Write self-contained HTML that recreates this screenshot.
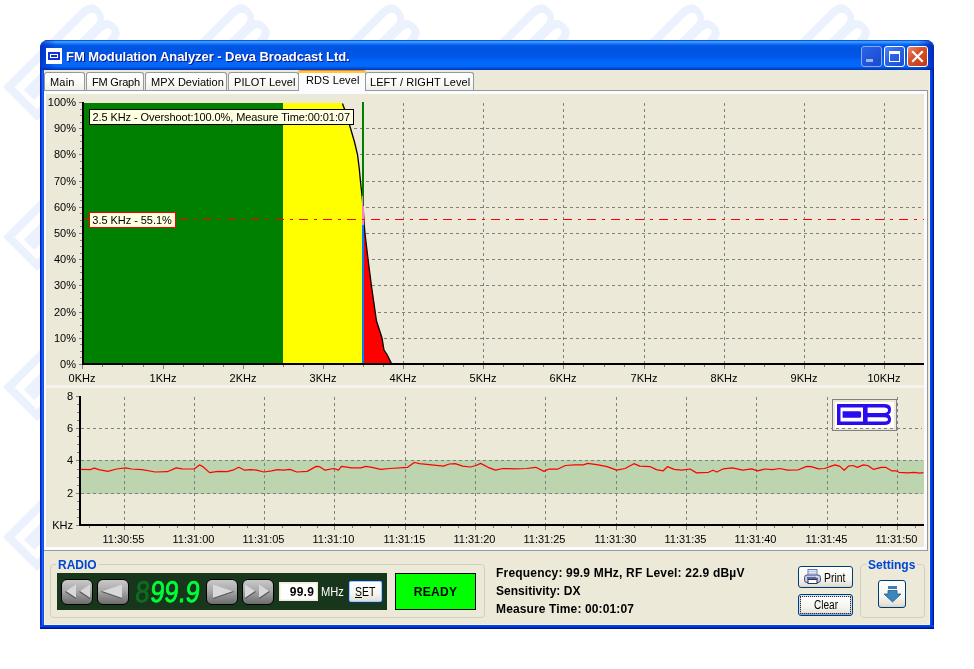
<!DOCTYPE html>
<html><head><meta charset="utf-8"><title>FM Modulation Analyzer - Deva Broadcast Ltd.</title>
<style>
html,body{margin:0;padding:0;}
body{width:974px;height:669px;overflow:hidden;background:#fff;position:relative;font-family:"Liberation Sans",Arial,sans-serif;font-size:11px;color:#000;}
.abs{position:absolute;}
svg.wm{position:absolute;left:0;top:0;}
svg.chart{position:absolute;left:0;top:0;}
#win{will-change:transform;position:absolute;left:40px;top:40px;width:894px;height:589px;background:#0855dd;border-radius:8px 8px 0 0;overflow:hidden;}
#title{position:absolute;left:0;top:0;width:894px;height:30px;background:linear-gradient(to bottom,#0a5ae0 0,#0a5ae0 1px,#419aff 1px,#3c96ff 2px,#2c88ff 3px,#0e6ef6 4px,#0460ea 5px,#0056e4 6.5px,#0054e2 9px,#0055e6 15px,#005af0 18px,#0366fa 21px,#0468fa 26px,#0260ee 27px,#0048d0 28.5px,#003cbc 29.5px,#0038b4 30px);}
#title .shadeL{position:absolute;left:0;top:0;width:16px;height:30px;background:linear-gradient(to right,rgba(0,40,190,.75),rgba(0,60,220,0));}
#title .shadeR{position:absolute;right:0;top:0;width:16px;height:30px;background:linear-gradient(to left,rgba(0,30,170,.8),rgba(0,60,220,0));}
#ttext{position:absolute;left:26px;top:9px;height:16px;line-height:16px;font-weight:bold;font-size:13px;color:#fff;white-space:nowrap;text-shadow:1px 1px 0 #0a1883;letter-spacing:-0.06px;}
#ticon{position:absolute;left:6px;top:8px;width:16px;height:16px;background:#fff;}
#ticon i{position:absolute;left:2px;top:4px;width:12px;height:8px;background:#1030d8;}
#ticon b{position:absolute;left:4px;top:6px;width:8px;height:4px;box-sizing:border-box;border:1px solid #fff;background:#1030d8;}
.cb{position:absolute;top:6px;width:21px;height:21px;box-sizing:border-box;border:1px solid #fff;border-radius:3px;}
#bmin{left:821px;background:linear-gradient(135deg,#2a66e8 0%,#2057dc 50%,#1a48cc 100%);border-color:#8ea8ea;}
#bmax{left:844px;background:linear-gradient(135deg,#4a86f5 0%,#2a62e6 45%,#1d4fd3 100%);}
#bclose{left:867px;background:linear-gradient(135deg,#ec8a6b 0%,#d8502a 40%,#c03a14 100%);}
#bmin i{position:absolute;left:4px;top:12px;width:7px;height:3px;background:#9fb4ea;}
#bmax i{position:absolute;left:4px;top:4px;width:11px;height:11px;box-sizing:border-box;border:1px solid #fff;border-top-width:3px;}
#bl{position:absolute;left:0;top:30px;width:4px;height:555px;background:linear-gradient(to right,#0a1fd0 0,#0a1fd0 1px,#0e3ce0 1px,#0e3ce0 2px,#1868f0 2px,#1868f0 3px,#0c50e4 3px);}
#br{position:absolute;right:0;top:30px;width:4px;height:559px;background:linear-gradient(to left,#001a9e 0,#001a9e 1px,#0030c8 1px,#0030c8 2px,#0046e8 2px);}
#bb{position:absolute;left:0;bottom:0;width:894px;height:4px;background:linear-gradient(to top,#001590 0,#001590 1px,#0020b8 1px,#0020b8 2px,#0044e8 2px);}
#client{position:absolute;left:4px;top:30px;width:886px;height:555px;background:#ece9d8;box-shadow:inset 1px 0 0 #fbf4dc,inset -1px -1px 0 #fbf4dc;}
/* coordinates below are page coordinates via wrapper at 0,0 */
#ui{position:absolute;left:0;top:0;width:974px;height:669px;will-change:transform;}
.tab{position:absolute;top:72px;height:18px;box-sizing:border-box;border:1px solid #919b9c;border-bottom:none;border-radius:3px 3px 0 0;background:linear-gradient(to bottom,#fff 0%,#fbfbf9 50%,#f0f0ea 100%);text-align:left;line-height:19px;white-space:nowrap;font-size:11px;}
.tab.sel{top:70px;height:21px;background:#fcfcfe;border-top:none;line-height:20px;z-index:3;border-radius:3px 3px 0 0;}
.tab.sel:before{content:"";position:absolute;left:-1px;right:-1px;top:0;height:3px;border-radius:3px 3px 0 0;background:linear-gradient(to bottom,#e68b2c 0,#e68b2c 1px,#ffc73c 1px,#ffc73c 100%);}
#pane{position:absolute;left:44px;top:90px;width:884px;height:461px;box-sizing:border-box;border:1px solid #919b9c;border-left:none;background:#fcfcfe;}
#pane i{position:absolute;left:2px;top:3px;width:878px;height:453px;background:#ece9d8;}
.gb{position:absolute;box-sizing:border-box;border:1px solid #d0d0bf;border-radius:4px;}
.gbl{position:absolute;font-weight:bold;color:#0046d5;background:#ece9d8;font-size:12px;line-height:13px;padding:0 2px;white-space:nowrap;}
.ms{display:inline-block;font-size:12px;transform-origin:0 0;white-space:nowrap;}
.xpb{position:absolute;box-sizing:border-box;border:1px solid #003c74;border-radius:3px;background:linear-gradient(to bottom,#fff 0%,#f6f5ef 60%,#e6e3d6 90%,#d6d0c5 100%);text-align:center;font-size:11px;white-space:nowrap;}
.mb{position:absolute;top:579px;width:32px;height:26px;box-sizing:border-box;border:1.5px solid #000;border-radius:6px;background:linear-gradient(to bottom,#c9c9c9 0%,#a9a9a9 45%,#6c6c6c 100%);}
.mb svg{position:absolute;left:-1.5px;top:-1.5px;}
#info{position:absolute;left:496px;top:564px;font-weight:bold;font-size:12px;line-height:18px;white-space:nowrap;}
</style></head><body>
<svg class="wm" width="974" height="669" viewBox="0 0 974 669"><g fill="#ebf1fd" fill-rule="evenodd"><path transform="translate(3 87) rotate(-45) scale(2.29)" d="M0 0H47Q54 0 54 5Q54 9.5 51.5 10.5Q54 11.5 54 16Q54 21 47 21H0ZM3.5 3.6H26V17.4H3.5ZM30.6 3.6H47Q51 3.6 51 6.3Q51 9 47 9H30.6ZM30.6 13.3H47Q51 13.3 51 15.4Q51 17.4 47 17.4H30.6ZM5.6 7.3H22.6Q24.1 7.3 24.1 8.8V12.2Q24.1 13.7 22.6 13.7H5.6Z"/><path transform="translate(153 87) rotate(-45) scale(2.29)" d="M0 0H47Q54 0 54 5Q54 9.5 51.5 10.5Q54 11.5 54 16Q54 21 47 21H0ZM3.5 3.6H26V17.4H3.5ZM30.6 3.6H47Q51 3.6 51 6.3Q51 9 47 9H30.6ZM30.6 13.3H47Q51 13.3 51 15.4Q51 17.4 47 17.4H30.6ZM5.6 7.3H22.6Q24.1 7.3 24.1 8.8V12.2Q24.1 13.7 22.6 13.7H5.6Z"/><path transform="translate(303 87) rotate(-45) scale(2.29)" d="M0 0H47Q54 0 54 5Q54 9.5 51.5 10.5Q54 11.5 54 16Q54 21 47 21H0ZM3.5 3.6H26V17.4H3.5ZM30.6 3.6H47Q51 3.6 51 6.3Q51 9 47 9H30.6ZM30.6 13.3H47Q51 13.3 51 15.4Q51 17.4 47 17.4H30.6ZM5.6 7.3H22.6Q24.1 7.3 24.1 8.8V12.2Q24.1 13.7 22.6 13.7H5.6Z"/><path transform="translate(453 87) rotate(-45) scale(2.29)" d="M0 0H47Q54 0 54 5Q54 9.5 51.5 10.5Q54 11.5 54 16Q54 21 47 21H0ZM3.5 3.6H26V17.4H3.5ZM30.6 3.6H47Q51 3.6 51 6.3Q51 9 47 9H30.6ZM30.6 13.3H47Q51 13.3 51 15.4Q51 17.4 47 17.4H30.6ZM5.6 7.3H22.6Q24.1 7.3 24.1 8.8V12.2Q24.1 13.7 22.6 13.7H5.6Z"/><path transform="translate(603 87) rotate(-45) scale(2.29)" d="M0 0H47Q54 0 54 5Q54 9.5 51.5 10.5Q54 11.5 54 16Q54 21 47 21H0ZM3.5 3.6H26V17.4H3.5ZM30.6 3.6H47Q51 3.6 51 6.3Q51 9 47 9H30.6ZM30.6 13.3H47Q51 13.3 51 15.4Q51 17.4 47 17.4H30.6ZM5.6 7.3H22.6Q24.1 7.3 24.1 8.8V12.2Q24.1 13.7 22.6 13.7H5.6Z"/><path transform="translate(753 87) rotate(-45) scale(2.29)" d="M0 0H47Q54 0 54 5Q54 9.5 51.5 10.5Q54 11.5 54 16Q54 21 47 21H0ZM3.5 3.6H26V17.4H3.5ZM30.6 3.6H47Q51 3.6 51 6.3Q51 9 47 9H30.6ZM30.6 13.3H47Q51 13.3 51 15.4Q51 17.4 47 17.4H30.6ZM5.6 7.3H22.6Q24.1 7.3 24.1 8.8V12.2Q24.1 13.7 22.6 13.7H5.6Z"/><path transform="translate(3 237) rotate(-45) scale(2.29)" d="M0 0H47Q54 0 54 5Q54 9.5 51.5 10.5Q54 11.5 54 16Q54 21 47 21H0ZM3.5 3.6H26V17.4H3.5ZM30.6 3.6H47Q51 3.6 51 6.3Q51 9 47 9H30.6ZM30.6 13.3H47Q51 13.3 51 15.4Q51 17.4 47 17.4H30.6ZM5.6 7.3H22.6Q24.1 7.3 24.1 8.8V12.2Q24.1 13.7 22.6 13.7H5.6Z"/><path transform="translate(3 387) rotate(-45) scale(2.29)" d="M0 0H47Q54 0 54 5Q54 9.5 51.5 10.5Q54 11.5 54 16Q54 21 47 21H0ZM3.5 3.6H26V17.4H3.5ZM30.6 3.6H47Q51 3.6 51 6.3Q51 9 47 9H30.6ZM30.6 13.3H47Q51 13.3 51 15.4Q51 17.4 47 17.4H30.6ZM5.6 7.3H22.6Q24.1 7.3 24.1 8.8V12.2Q24.1 13.7 22.6 13.7H5.6Z"/><path transform="translate(3 537) rotate(-45) scale(2.29)" d="M0 0H47Q54 0 54 5Q54 9.5 51.5 10.5Q54 11.5 54 16Q54 21 47 21H0ZM3.5 3.6H26V17.4H3.5ZM30.6 3.6H47Q51 3.6 51 6.3Q51 9 47 9H30.6ZM30.6 13.3H47Q51 13.3 51 15.4Q51 17.4 47 17.4H30.6ZM5.6 7.3H22.6Q24.1 7.3 24.1 8.8V12.2Q24.1 13.7 22.6 13.7H5.6Z"/></g></svg>
<div id="win">
 <div id="title"><div class="shadeL"></div><div class="shadeR"></div>
  <div id="ticon"><i></i><b></b></div>
  <div id="ttext">FM Modulation Analyzer - Deva Broadcast Ltd.</div>
  <div class="cb" id="bmin"><i></i></div>
  <div class="cb" id="bmax"><i></i></div>
  <div class="cb" id="bclose"><svg width="19" height="19" viewBox="0 0 19 19"><path d="M5 5L14 14M14 5L5 14" stroke="#fff" stroke-width="2.2" stroke-linecap="square"/></svg></div>
 </div>
 <div id="client"></div>
 <div id="bl"></div><div id="br"></div><div id="bb"></div>
</div>
<div id="ui">
 <div id="pane"><i></i></div>
 <div class="tab" style="left:44px;width:41px;padding-left:5px;letter-spacing:0.2px;">Main</div>
 <div class="tab" style="left:86px;width:58px;padding-left:5px;letter-spacing:-0.2px;">FM Graph</div>
 <div class="tab" style="left:145px;width:82px;padding-left:5px;letter-spacing:0px;">MPX Deviation</div>
 <div class="tab" style="left:228px;width:71px;padding-left:5px;letter-spacing:0.05px;">PILOT Level</div>
 <div class="tab" style="left:365px;width:109px;padding-left:4px;letter-spacing:0.05px;">LEFT / RIGHT Level</div>
 <div class="tab sel" style="left:298px;width:68px;padding-left:7px;letter-spacing:0.1px;">RDS Level</div>
 <svg class="chart" width="974" height="669" viewBox="0 0 974 669">
<g stroke="#808080" stroke-width="1" stroke-dasharray="3 3" shape-rendering="crispEdges" fill="none">
<path d="M84 338.5H922"/>
<path d="M84 312.5H922"/>
<path d="M84 285.5H922"/>
<path d="M84 259.5H922"/>
<path d="M84 233.5H922"/>
<path d="M84 207.5H922"/>
<path d="M84 181.5H922"/>
<path d="M84 154.5H922"/>
<path d="M84 128.5H922"/>
<path d="M403.5 103V363"/>
<path d="M483.5 103V363"/>
<path d="M563.5 103V363"/>
<path d="M644.5 103V363"/>
<path d="M724.5 103V363"/>
<path d="M804.5 103V363"/>
<path d="M884.5 103V363"/>
</g>
<g shape-rendering="crispEdges">
<rect x="84" y="103" width="199" height="261" fill="#008000"/>
<polygon points="283.0,103.0 342.4,103.4 344.5,109.0 347.0,117.0 350.6,128.5 354.5,142.0 357.5,154.6 359.2,168.0 360.4,180.8 362.0,195.4 362.0,364.0 283.0,364.0" fill="#ffff00"/>
<polygon points="364.0,224.0 364.2,224.5 365.0,233.5 368.0,259.0 371.4,285.5 375.2,312.0 376.5,321.0 382.0,338.0 384.0,350.0 387.0,354.5 391.5,363.5 364.0,364.0" fill="#ff0000"/>
</g>
<polyline points="342.4,103.4 344.5,109.0 347.0,117.0 350.6,128.5 354.5,142.0 357.5,154.6 359.2,168.0 360.4,180.8 362.0,195.4 363.3,210.0 364.2,224.5 365.0,233.5 368.0,259.0 371.4,285.5 375.2,312.0 376.5,321.0 382.0,338.0 384.0,350.0 387.0,354.5 391.5,363.5" fill="none" stroke="#000" stroke-width="1.3"/>
<g shape-rendering="crispEdges">
<rect x="362" y="102" width="2" height="94" fill="#008000"/>
<rect x="363" y="196" width="1" height="10" fill="#008000"/>
<rect x="362" y="196" width="1" height="29" fill="#ff80c0"/>
<rect x="363" y="206" width="1" height="19" fill="#ff80c0"/>
<rect x="362" y="225" width="2" height="139" fill="#0080ff"/>
<path d="M83 219.5H924" stroke="#ff0000" stroke-width="1" stroke-dasharray="9 6 3 6" fill="none"/>
<rect x="82" y="102" width="2" height="263" fill="#000"/>
<rect x="82" y="363" width="842" height="2" fill="#000"/>
<g fill="#808080">
<rect x="79" y="364" width="3" height="1"/>
<rect x="80" y="357" width="2" height="1"/>
<rect x="80" y="351" width="2" height="1"/>
<rect x="80" y="344" width="2" height="1"/>
<rect x="79" y="338" width="3" height="1"/>
<rect x="80" y="331" width="2" height="1"/>
<rect x="80" y="325" width="2" height="1"/>
<rect x="80" y="318" width="2" height="1"/>
<rect x="79" y="312" width="3" height="1"/>
<rect x="80" y="305" width="2" height="1"/>
<rect x="80" y="298" width="2" height="1"/>
<rect x="80" y="292" width="2" height="1"/>
<rect x="79" y="285" width="3" height="1"/>
<rect x="80" y="279" width="2" height="1"/>
<rect x="80" y="272" width="2" height="1"/>
<rect x="80" y="266" width="2" height="1"/>
<rect x="79" y="259" width="3" height="1"/>
<rect x="80" y="253" width="2" height="1"/>
<rect x="80" y="246" width="2" height="1"/>
<rect x="80" y="240" width="2" height="1"/>
<rect x="79" y="233" width="3" height="1"/>
<rect x="80" y="226" width="2" height="1"/>
<rect x="80" y="220" width="2" height="1"/>
<rect x="80" y="213" width="2" height="1"/>
<rect x="79" y="207" width="3" height="1"/>
<rect x="80" y="200" width="2" height="1"/>
<rect x="80" y="194" width="2" height="1"/>
<rect x="80" y="187" width="2" height="1"/>
<rect x="79" y="181" width="3" height="1"/>
<rect x="80" y="174" width="2" height="1"/>
<rect x="80" y="168" width="2" height="1"/>
<rect x="80" y="161" width="2" height="1"/>
<rect x="79" y="154" width="3" height="1"/>
<rect x="80" y="148" width="2" height="1"/>
<rect x="80" y="141" width="2" height="1"/>
<rect x="80" y="135" width="2" height="1"/>
<rect x="79" y="128" width="3" height="1"/>
<rect x="80" y="122" width="2" height="1"/>
<rect x="80" y="115" width="2" height="1"/>
<rect x="80" y="109" width="2" height="1"/>
<rect x="79" y="102" width="3" height="1"/>
<rect x="82" y="365" width="1" height="4"/>
<rect x="102" y="365" width="1" height="2"/>
<rect x="122" y="365" width="1" height="2"/>
<rect x="143" y="365" width="1" height="2"/>
<rect x="163" y="365" width="1" height="4"/>
<rect x="183" y="365" width="1" height="2"/>
<rect x="203" y="365" width="1" height="2"/>
<rect x="223" y="365" width="1" height="2"/>
<rect x="243" y="365" width="1" height="4"/>
<rect x="263" y="365" width="1" height="2"/>
<rect x="283" y="365" width="1" height="2"/>
<rect x="303" y="365" width="1" height="2"/>
<rect x="323" y="365" width="1" height="4"/>
<rect x="343" y="365" width="1" height="2"/>
<rect x="363" y="365" width="1" height="2"/>
<rect x="383" y="365" width="1" height="2"/>
<rect x="403" y="365" width="1" height="4"/>
<rect x="423" y="365" width="1" height="2"/>
<rect x="443" y="365" width="1" height="2"/>
<rect x="463" y="365" width="1" height="2"/>
<rect x="483" y="365" width="1" height="4"/>
<rect x="503" y="365" width="1" height="2"/>
<rect x="523" y="365" width="1" height="2"/>
<rect x="543" y="365" width="1" height="2"/>
<rect x="563" y="365" width="1" height="4"/>
<rect x="583" y="365" width="1" height="2"/>
<rect x="604" y="365" width="1" height="2"/>
<rect x="624" y="365" width="1" height="2"/>
<rect x="644" y="365" width="1" height="4"/>
<rect x="664" y="365" width="1" height="2"/>
<rect x="684" y="365" width="1" height="2"/>
<rect x="704" y="365" width="1" height="2"/>
<rect x="724" y="365" width="1" height="4"/>
<rect x="744" y="365" width="1" height="2"/>
<rect x="764" y="365" width="1" height="2"/>
<rect x="784" y="365" width="1" height="2"/>
<rect x="804" y="365" width="1" height="4"/>
<rect x="824" y="365" width="1" height="2"/>
<rect x="844" y="365" width="1" height="2"/>
<rect x="864" y="365" width="1" height="2"/>
<rect x="884" y="365" width="1" height="4"/>
<rect x="904" y="365" width="1" height="2"/>
</g>
</g>
<g font-family="Liberation Sans, Arial, sans-serif" font-size="11" fill="#000">
<text x="76" y="368" text-anchor="end">0%</text>
<text x="76" y="342" text-anchor="end">10%</text>
<text x="76" y="316" text-anchor="end">20%</text>
<text x="76" y="289" text-anchor="end">30%</text>
<text x="76" y="263" text-anchor="end">40%</text>
<text x="76" y="237" text-anchor="end">50%</text>
<text x="76" y="211" text-anchor="end">60%</text>
<text x="76" y="185" text-anchor="end">70%</text>
<text x="76" y="158" text-anchor="end">80%</text>
<text x="76" y="132" text-anchor="end">90%</text>
<text x="76" y="106" text-anchor="end">100%</text>
<text x="82" y="382" text-anchor="middle">0KHz</text>
<text x="163" y="382" text-anchor="middle">1KHz</text>
<text x="243" y="382" text-anchor="middle">2KHz</text>
<text x="323" y="382" text-anchor="middle">3KHz</text>
<text x="403" y="382" text-anchor="middle">4KHz</text>
<text x="483" y="382" text-anchor="middle">5KHz</text>
<text x="563" y="382" text-anchor="middle">6KHz</text>
<text x="644" y="382" text-anchor="middle">7KHz</text>
<text x="724" y="382" text-anchor="middle">8KHz</text>
<text x="804" y="382" text-anchor="middle">9KHz</text>
<text x="884" y="382" text-anchor="middle">10KHz</text>
</g>
<g shape-rendering="crispEdges">
<rect x="89.5" y="109.5" width="264" height="15" fill="#ffffe1" stroke="#000"/>
<rect x="89.5" y="212.5" width="86" height="15" fill="#ffffe1" stroke="#ff0000"/>
</g>
<g font-family="Liberation Sans, Arial, sans-serif" font-size="11" fill="#000">
<text x="92.5" y="121" textLength="257.5" lengthAdjust="spacing">2.5 KHz - Overshoot:100.0%, Measure Time:00:01:07</text>
<text x="92.3" y="224" textLength="79.5" lengthAdjust="spacing">3.5 KHz - 55.1%</text>
</g>
<rect x="46" y="385" width="878" height="3" fill="#f4f2ea" shape-rendering="crispEdges"/>
<g shape-rendering="crispEdges">
<rect x="81" y="460" width="843" height="34" fill="#bdd5ae"/>
</g>
<g stroke="#808080" stroke-width="1" stroke-dasharray="3 3" shape-rendering="crispEdges" fill="none">
<path d="M81 493.5H922"/>
<path d="M81 460.5H922"/>
<path d="M81 428.5H922"/>
<path d="M124.5 397V524"/>
<path d="M194.5 397V524"/>
<path d="M264.5 397V524"/>
<path d="M334.5 397V524"/>
<path d="M405.5 397V524"/>
<path d="M475.5 397V524"/>
<path d="M545.5 397V524"/>
<path d="M616.5 397V524"/>
<path d="M686.5 397V524"/>
<path d="M756.5 397V524"/>
<path d="M827.5 397V524"/>
<path d="M897.5 397V524"/>
</g>
<g shape-rendering="crispEdges">
<rect x="832.5" y="399.5" width="64" height="31" fill="#ece9d8" stroke="#808080"/>
<rect x="835" y="402" width="59" height="26" fill="#fff"/>
</g>
<path transform="translate(837 404)" fill="#2a0cf0" fill-rule="evenodd" d="M0 0H47Q54 0 54 5Q54 9.5 51.5 10.5Q54 11.5 54 16Q54 21 47 21H0ZM3.5 3.6H26V17.4H3.5ZM30.6 3.6H47Q51 3.6 51 6.3Q51 9 47 9H30.6ZM30.6 13.3H47Q51 13.3 51 15.4Q51 17.4 47 17.4H30.6ZM5.6 7.3H22.6Q24.1 7.3 24.1 8.8V12.2Q24.1 13.7 22.6 13.7H5.6Z"/>
<path d="M836 428.5H894" stroke="#808080" stroke-dasharray="3 3" shape-rendering="crispEdges"/>
<polyline points="81.0,469.4 90.0,469.6 94.4,468.2 98.8,469.6 107.8,471.4 116.7,469.0 125.6,467.9 131.6,469.0 142.0,469.6 155.4,472.0 167.3,471.7 176.2,467.9 182.2,468.8 194.1,469.0 199.5,464.9 203.0,466.7 209.6,472.6 217.9,471.4 226.9,471.7 232.8,470.2 238.8,467.3 244.7,470.2 250.7,469.6 256.6,470.2 264.0,472.0 271.5,470.8 277.5,469.6 283.4,470.2 290.0,469.4 296.8,472.0 307.2,471.4 316.2,466.4 319.7,466.7 325.1,470.2 334.0,468.5 338.5,470.2 341.5,466.4 351.9,467.9 360.8,467.9 366.0,466.4 371.9,467.3 380.8,469.4 389.8,468.5 407.6,467.3 414.2,462.5 419.5,463.7 431.5,464.9 443.4,466.1 449.3,464.0 455.3,463.7 462.7,466.1 470.2,467.0 476.1,465.5 480.6,463.4 488.0,467.3 495.5,470.2 502.9,468.5 514.8,468.8 526.7,468.5 535.7,467.3 544.0,471.4 549.0,469.0 558.0,469.0 565.4,465.5 574.4,464.9 583.3,464.9 587.8,463.4 598.2,464.9 607.1,466.7 616.6,470.2 625.0,468.5 633.9,463.7 639.8,466.1 650.4,466.7 656.4,469.6 663.2,470.8 667.4,466.7 674.2,469.4 681.7,470.2 690.0,469.0 696.6,472.9 708.5,472.3 712.9,470.2 716.8,472.0 723.4,468.8 732.3,467.9 742.7,470.2 751.6,468.8 757.6,470.8 765.0,469.0 772.5,469.6 779.9,468.5 787.4,470.2 797.8,470.0 806.7,466.4 811.2,466.7 818.6,468.8 824.6,468.5 830.5,466.4 835.0,464.9 840.0,466.4 844.2,470.2 848.4,466.1 852.9,465.5 857.3,467.3 863.3,464.9 867.7,465.5 873.7,469.4 881.1,467.3 885.6,467.3 891.6,470.8 896.0,470.8 899.0,472.3 907.9,472.9 913.9,472.3 919.8,473.2 923.4,472.6" fill="none" stroke="#ff0000" stroke-width="1.25" stroke-linejoin="round"/>
<g shape-rendering="crispEdges">
<rect x="79" y="396" width="2" height="130" fill="#000"/>
<rect x="79" y="524" width="845" height="2" fill="#000"/>
<g fill="#808080">
<rect x="76" y="525" width="3" height="1"/>
<rect x="77" y="517" width="2" height="1"/>
<rect x="77" y="509" width="2" height="1"/>
<rect x="77" y="501" width="2" height="1"/>
<rect x="76" y="493" width="3" height="1"/>
<rect x="77" y="485" width="2" height="1"/>
<rect x="77" y="477" width="2" height="1"/>
<rect x="77" y="469" width="2" height="1"/>
<rect x="76" y="460" width="3" height="1"/>
<rect x="77" y="452" width="2" height="1"/>
<rect x="77" y="444" width="2" height="1"/>
<rect x="77" y="436" width="2" height="1"/>
<rect x="76" y="428" width="3" height="1"/>
<rect x="77" y="420" width="2" height="1"/>
<rect x="77" y="412" width="2" height="1"/>
<rect x="77" y="404" width="2" height="1"/>
<rect x="76" y="396" width="3" height="1"/>
<rect x="89" y="526" width="1" height="2"/>
<rect x="106" y="526" width="1" height="2"/>
<rect x="124" y="526" width="1" height="4"/>
<rect x="142" y="526" width="1" height="2"/>
<rect x="159" y="526" width="1" height="2"/>
<rect x="177" y="526" width="1" height="2"/>
<rect x="194" y="526" width="1" height="4"/>
<rect x="212" y="526" width="1" height="2"/>
<rect x="229" y="526" width="1" height="2"/>
<rect x="247" y="526" width="1" height="2"/>
<rect x="264" y="526" width="1" height="4"/>
<rect x="282" y="526" width="1" height="2"/>
<rect x="300" y="526" width="1" height="2"/>
<rect x="317" y="526" width="1" height="2"/>
<rect x="334" y="526" width="1" height="4"/>
<rect x="352" y="526" width="1" height="2"/>
<rect x="370" y="526" width="1" height="2"/>
<rect x="388" y="526" width="1" height="2"/>
<rect x="405" y="526" width="1" height="4"/>
<rect x="423" y="526" width="1" height="2"/>
<rect x="440" y="526" width="1" height="2"/>
<rect x="458" y="526" width="1" height="2"/>
<rect x="475" y="526" width="1" height="4"/>
<rect x="493" y="526" width="1" height="2"/>
<rect x="511" y="526" width="1" height="2"/>
<rect x="528" y="526" width="1" height="2"/>
<rect x="545" y="526" width="1" height="4"/>
<rect x="563" y="526" width="1" height="2"/>
<rect x="581" y="526" width="1" height="2"/>
<rect x="599" y="526" width="1" height="2"/>
<rect x="616" y="526" width="1" height="4"/>
<rect x="634" y="526" width="1" height="2"/>
<rect x="651" y="526" width="1" height="2"/>
<rect x="669" y="526" width="1" height="2"/>
<rect x="686" y="526" width="1" height="4"/>
<rect x="704" y="526" width="1" height="2"/>
<rect x="722" y="526" width="1" height="2"/>
<rect x="739" y="526" width="1" height="2"/>
<rect x="756" y="526" width="1" height="4"/>
<rect x="774" y="526" width="1" height="2"/>
<rect x="792" y="526" width="1" height="2"/>
<rect x="809" y="526" width="1" height="2"/>
<rect x="827" y="526" width="1" height="4"/>
<rect x="845" y="526" width="1" height="2"/>
<rect x="862" y="526" width="1" height="2"/>
<rect x="880" y="526" width="1" height="2"/>
<rect x="897" y="526" width="1" height="4"/>
<rect x="915" y="526" width="1" height="2"/>
</g></g>
<g font-family="Liberation Sans, Arial, sans-serif" font-size="11" fill="#000">
<text x="73" y="497" text-anchor="end">2</text>
<text x="73" y="464" text-anchor="end">4</text>
<text x="73" y="432" text-anchor="end">6</text>
<text x="73" y="400" text-anchor="end">8</text>
<text x="73" y="529" text-anchor="end">KHz</text>
<text x="123.5" y="543" text-anchor="middle">11:30:55</text>
<text x="193.5" y="543" text-anchor="middle">11:31:00</text>
<text x="263.5" y="543" text-anchor="middle">11:31:05</text>
<text x="333.5" y="543" text-anchor="middle">11:31:10</text>
<text x="404.5" y="543" text-anchor="middle">11:31:15</text>
<text x="474.5" y="543" text-anchor="middle">11:31:20</text>
<text x="544.5" y="543" text-anchor="middle">11:31:25</text>
<text x="615.5" y="543" text-anchor="middle">11:31:30</text>
<text x="685.5" y="543" text-anchor="middle">11:31:35</text>
<text x="755.5" y="543" text-anchor="middle">11:31:40</text>
<text x="826.5" y="543" text-anchor="middle">11:31:45</text>
<text x="896.5" y="543" text-anchor="middle">11:31:50</text>
</g>
</svg>
 <!-- RADIO group -->
 <div class="gb" style="left:50px;top:564px;width:435px;height:54px;"></div>
 <div class="gbl" style="left:56px;top:559px;">RADIO</div>
 <div class="abs" style="left:57px;top:573px;width:330px;height:37px;background:#18361c;"></div>
 <div class="mb" style="left:61px;"><svg width="32" height="26"><path d="M4.5 12.5L15 5.5V19.5Z M18.5 12.5L29 5.5V19.5Z" fill="#d8d8d8"/><path d="M4.5 12.5L15 19.5M18.5 12.5L29 19.5" stroke="#555" stroke-width="1.2" fill="none"/></svg></div>
 <div class="mb" style="left:97px;"><svg width="32" height="26"><path d="M4.5 12.5L25 5.5V19.5Z" fill="#d8d8d8"/><path d="M4.5 12.5L25 19.5" stroke="#555" stroke-width="1.2" fill="none"/></svg></div>
 <div class="abs" id="led" style="left:134px;top:577px;width:68px;height:28px;"><span class="ghost">8</span><span class="lit">99.9</span></div>
 <div class="mb" style="left:206px;"><svg width="32" height="26"><path d="M27.5 12.5L7 5.5V19.5Z" fill="#d8d8d8"/><path d="M27.5 12.5L7 19.5" stroke="#555" stroke-width="1.2" fill="none"/></svg></div>
 <div class="mb" style="left:242px;"><svg width="32" height="26"><path d="M13.5 12.5L3 5.5V19.5Z M27.5 12.5L17 5.5V19.5Z" fill="#d8d8d8"/><path d="M13.5 12.5L3 19.5M27.5 12.5L17 19.5" stroke="#555" stroke-width="1.2" fill="none"/></svg></div>
 <div class="abs" style="left:279px;top:582px;width:39px;height:19px;box-sizing:border-box;border:1px solid #ece9d8;box-shadow:inset 0 0 0 1px #f8f4e6;background:#fff;font-weight:bold;font-size:12px;line-height:18px;text-align:right;padding-right:3px;letter-spacing:0.2px;">99.9</div>
 <div class="abs ms" style="left:321px;top:585px;color:#fff;line-height:14px;transform:scaleX(0.93);">MHz</div>
 <div class="xpb" style="left:348px;top:580px;width:35px;height:23px;box-shadow:inset 0 0 0 1px #a9c2f0;"><span class="ms" style="position:absolute;left:6px;top:4px;line-height:14px;transform:scaleX(0.87);"><u>S</u>ET</span></div>
 <div class="abs" style="left:395px;top:573px;width:81px;height:37px;box-sizing:border-box;border:1px solid #000;background:#00ff00;font-weight:bold;font-size:12px;line-height:37px;text-align:center;letter-spacing:0.3px;">READY</div>
 <div id="info"><span style="letter-spacing:0.19px">Frequency: 99.9 MHz, RF Level: 22.9 dBµV</span><br><span style="letter-spacing:0.03px">Sensitivity: DX</span><br><span style="letter-spacing:0.13px">Measure Time: 00:01:07</span></div>
 <div class="xpb" style="left:798px;top:566px;width:55px;height:22px;line-height:20px;"><svg width="18" height="17" viewBox="0 0 18 17" style="position:absolute;left:5px;top:2px;"><rect x="4" y="0.5" width="9" height="6" fill="#e4ebfb" stroke="#6b7aa8"/><path d="M5 2.5H12M5 4.5H12" stroke="#b7c6ee" stroke-width="1"/><rect x="0.5" y="6" width="16" height="7.5" rx="2.5" fill="#c3cdea" stroke="#46527e"/><rect x="3" y="8" width="11" height="2" fill="#5e6a96"/><rect x="4" y="10.5" width="9" height="4" fill="#fff" stroke="#2c3350"/><rect x="12.3" y="7.3" width="1.4" height="1.4" fill="#fff"/></svg><span class="ms" style="position:absolute;left:25px;top:4px;line-height:14px;transform:scaleX(0.87);">Print</span></div>
 <div class="xpb" style="left:798px;top:594px;width:55px;height:22px;line-height:20px;box-shadow:inset 0 1px 0 1px #cfe0fc,inset 0 -1px 0 1px #86a8e2,inset 0 0 0 2px #b0c8f2;"><span style="position:absolute;left:1px;top:1px;right:1px;bottom:1px;border:1px dotted #3a2a10;"></span><span class="ms" style="position:absolute;left:14.5px;top:3px;line-height:14px;transform:scaleX(0.84);">Clear</span></div>
 <div class="gb" style="left:860px;top:564px;width:65px;height:54px;"></div>
 <div class="gbl" style="left:866px;top:559px;">Settings</div>
 <div class="xpb" style="left:878px;top:580px;width:28px;height:28px;"><svg width="26" height="26" viewBox="0 0 26 26" style="position:absolute;left:0;top:0;"><rect x="9" y="5" width="9" height="3" fill="#3c7fb5"/><path d="M9 9.5H18V13H22L13.5 21L5 13H9Z" fill="#3a86bd" stroke="#1f5f91" stroke-width="0.8"/></svg></div>
</div>
<style>
#led{font-family:"Liberation Sans",Arial,sans-serif;font-weight:normal;white-space:nowrap;}
#led span{position:absolute;top:1px;font-size:30px;line-height:28px;transform-origin:0 100%;transform:skewX(-6deg) scaleX(0.85);-webkit-text-stroke:0.8px currentColor;}
#led .ghost{left:0px;color:#0b6f1c;}
#led .lit{left:14.5px;color:#00ff38;}
</style>
</body></html>
